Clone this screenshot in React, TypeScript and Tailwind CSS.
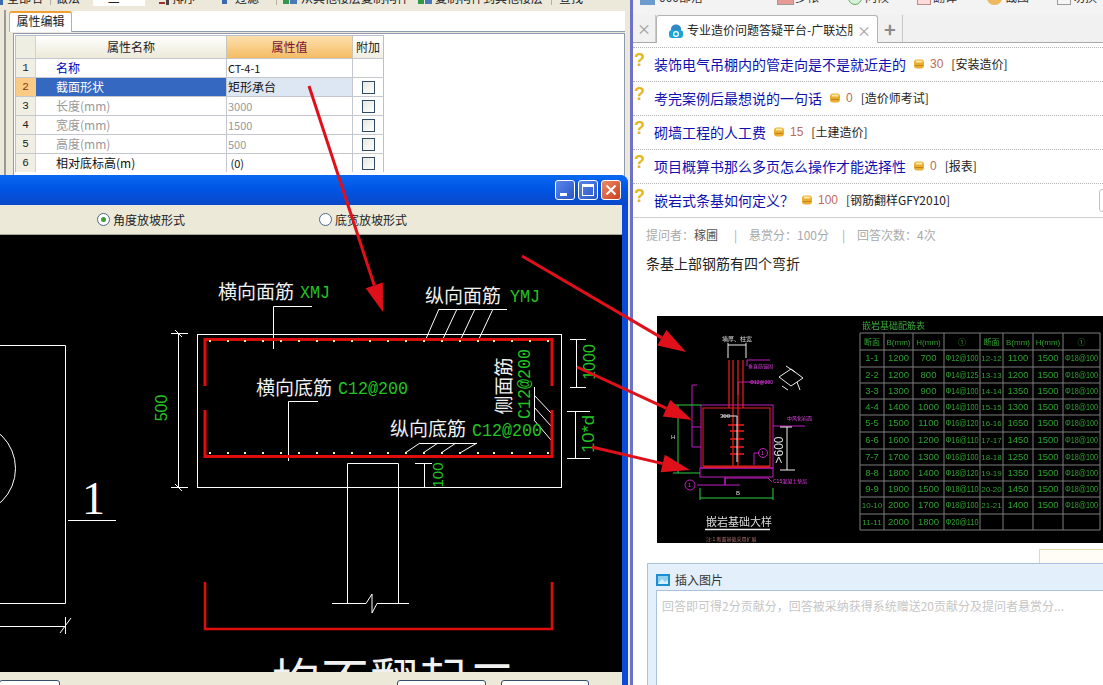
const QUESTIONS = [
  { title: "装饰电气吊棚内的管走向是不是就近走的", score: "30", tag: "[安装造价]" },
  { title: "考完案例后最想说的一句话", score: "0", tag: "[造价师考试]" },
  { title: "砌墙工程的人工费", score: "15", tag: "[土建造价]" },
  { title: "项目概算书那么多页怎么操作才能选择性", score: "0", tag: "[报表]" },
  { title: "嵌岩式条基如何定义？", score: "100", tag: "[钢筋翻样GFY2010]" },
];

const PROPS = [
  { no: "1", name: "名称", value: "CT-4-1", kind: "link", noCheck: true },
  { no: "2", name: "截面形状", value: "矩形承台", kind: "selected" },
  { no: "3", name: "长度(mm)", value: "3000", kind: "muted" },
  { no: "4", name: "宽度(mm)", value: "1500", kind: "muted" },
  { no: "5", name: "高度(mm)", value: "500", kind: "muted" },
  { no: "6", name: "相对底标高(m)", value: " (0)", kind: "plain" },
];

const TOP_DOTS = [210, 228, 245, 263, 281, 299, 317, 334, 352, 370, 388, 406, 424, 442, 460, 478, 494, 512, 530, 548];

const REBAR_ROWS = [
  ["1-1", "1200", "700", "Φ12@100", "12-12", "1100", "1500", "Φ18@100"],
  ["2-2", "1200", "800", "Φ14@125", "13-13", "1200", "1500", "Φ18@100"],
  ["3-3", "1300", "900", "Φ14@100", "14-14", "1350", "1500", "Φ18@100"],
  ["4-4", "1400", "1000", "Φ14@100", "15-15", "1300", "1500", "Φ18@100"],
  ["5-5", "1500", "1100", "Φ16@120", "16-16", "1650", "1500", "Φ18@100"],
  ["6-6", "1600", "1200", "Φ16@110", "17-17", "1450", "1500", "Φ18@100"],
  ["7-7", "1700", "1300", "Φ16@100", "18-18", "1250", "1500", "Φ18@100"],
  ["8-8", "1800", "1400", "Φ18@120", "19-19", "1350", "1500", "Φ18@100"],
  ["9-9", "1900", "1500", "Φ18@110", "20-20", "1450", "1500", "Φ18@100"],
  ["10-10", "2000", "1700", "Φ18@100", "21-21", "1400", "1500", "Φ18@100"],
  ["11-11", "2000", "1800", "Φ20@110", "", "", "", ""],
];
const COL_X = [860, 884, 913, 944, 980, 1003, 1033, 1063, 1100];
const ROW_Y = [333, 350, 367, 383, 399, 415, 432, 449, 465, 481, 497, 514, 530];
const ARROWS = [
  [309, 86, 383, 312],
  [522, 256, 686, 352],
  [577, 367, 692, 420],
  [592, 447, 690, 470],
];

function Coin() {
  return (
    <svg width="10" height="10" viewBox="0 0 10 10" className="block shrink-0">
      <rect x="0" y="0.5" width="10" height="9" rx="3" fill="#e9ae30" />
      <rect x="1.5" y="1.5" width="7" height="2" rx="1" fill="#fbe9a6" />
      <rect x="1" y="6" width="8" height="1" fill="#c4831a" />
    </svg>
  );
}

function Checkbox() {
  return <span className="block w-[13px] h-[13px] border border-[#2f4a63] bg-gradient-to-br from-[#e8e8e0] to-white" />;
}

function Toolbars() {
  return (
    <div className="h-[10px] shrink-0 bg-[#ece8da] overflow-hidden text-[12px] leading-none text-[#222]">
      <div className="flex items-start -mt-[8px]">
        <span className="w-[3px] h-[13px] bg-[#3a6ab0] mr-[4px]" />
        <span className="w-[43px]">全部名</span>
        <span className="w-[35px] h-[13px] border-l border-[#b5b0a0] pl-[5px]">做法</span>
        <span className="w-[73px] h-[14px] pl-[8px]"><span className="block w-[52px] h-[14px] bg-white">一 二</span></span>
        <span className="w-[64px] flex">
          <span className="w-[6px] h-[12px] ml-[1px] border-b-2 border-[#a03030]" />
          <span className="w-[3px] h-[13px] ml-[1px] mr-[3px] bg-[#444]" />
          排序
        </span>
        <span className="w-[54px] flex">
          <span className="w-[5px] h-[12px] mr-[8px] bg-[#3a6ab0]" />
          过滤
        </span>
        <span className="w-[136px] h-[13px] border-l border-[#b5b0a0] flex">
          <span className="w-[6px] h-[12px] ml-[6px] bg-[#2f9a4a]" />
          <span className="w-[7px] h-[12px] ml-[1px] mr-[4px] bg-[#4a78b8]" />
          从其他楼层复制构件
        </span>
        <span className="w-[139px] flex">
          <span className="w-[6px] h-[12px] ml-[6px] bg-[#2f9a4a]" />
          <span className="w-[7px] h-[12px] ml-[1px] mr-[3px] bg-[#4a78b8]" />
          复制构件到其他楼层
        </span>
        <span className="h-[13px] pl-[7px] border-l border-[#b5b0a0]">查找</span>
      </div>
    </div>
  );
}

function PropsTable() {
  return (
    <div className="text-[12px] leading-none w-[369px] border-l border-t border-[#b9c0c8]">
      <div className="grid grid-cols-[20px_191px_126px_31px] h-[22px]">
        <div className="bg-[#efeee2] border-r border-[#d5d3c5]" />
        <div className="flex items-center justify-center bg-gradient-to-b from-white to-[#ece9d8] border-r border-[#c8c6b8] text-[#222]">属性名称</div>
        <div className="flex items-center justify-center bg-gradient-to-b from-[#fde0ac] to-[#f4bc62] border-r border-[#c8c6b8] text-[#7a1030]">属性值</div>
        <div className="flex items-center justify-center bg-gradient-to-b from-white to-[#f0eee2] border-r border-[#b9c0c8] text-[#222]">附加</div>
      </div>
      {PROPS.map((row) => {
        const selected = row.kind === "selected";
        const textColor = row.kind === "link" ? "text-[#0000c0]" : row.kind === "muted" ? "text-[#999]" : "text-[#111]";
        return (
          <div key={row.no} className="grid grid-cols-[20px_191px_126px_31px] h-[19px] border-t border-[#c4c8ce]">
            <div className={`flex items-center justify-center font-['Liberation_Mono',monospace] text-[11px] border-r border-[#d5d3c5] ${selected ? "bg-[#fbcb85] text-[#7a3a10]" : "bg-[#f1efe4] text-[#222]"}`}>{row.no}</div>
            <div className={`flex items-center pl-[20px] border-r border-[#c4c8ce] ${selected ? "bg-[#3568c0] text-white" : `bg-white ${textColor}`}`}>{row.name}</div>
            <div className={`flex items-center pl-[1px] border-r border-[#c4c8ce] whitespace-pre ${selected ? "bg-[#dde7f4] text-[#111]" : `text-[11px] bg-white ${row.kind === "link" ? "text-[#111]" : textColor}`}`}>{row.value}</div>
            <div className="flex items-center justify-center bg-white border-r border-[#b9c0c8]">{row.noCheck ? null : <Checkbox />}</div>
          </div>
        );
      })}
    </div>
  );
}

function PropertyPanel() {
  return (
    <div className="flex-1 flex bg-[#ece8da] pr-[5px]">
      <div className="w-[4px]" />
      <div className="w-[2px] bg-[#9a9a94] h-[165px]" />
      <div className="flex-1 flex flex-col min-w-0 pl-[3px]">
        <div className="flex h-[21px] mt-[1px]">
          <div className="w-[63px] h-[21px] bg-white border-t-2 border-x border-t-[#f0a030] border-x-[#a9b3c0] rounded-t-[3px] text-[12px] leading-[16px] text-center text-[#222]">属性编辑</div>
          <div className="flex-1 bg-white border-b border-[#8e9bb0]" />
        </div>
        <div className="flex-1 bg-white ml-[4px] mt-[1px] border-t border-l border-r border-[#8e9bb0] pl-[1px] pt-[1px]">
          <PropsTable />
        </div>
      </div>
    </div>
  );
}

function CadDrawing() {
  return (
    <svg viewBox="0 235 622 437" className="block w-[622px] h-[437px] font-['Noto_Sans_CJK_SC',sans-serif]">
      <g stroke="#fff" strokeWidth="1" fill="none">
        <rect x="197.5" y="334.5" width="364" height="153" />
        <path d="M0 345.5H65.5V603.5H0M0 626.5H65M65.5 617V634M60 633L71 618M68 520.5H116" />
        <circle cx="-30.5" cy="468.5" r="46" />
        <path d="M178.5 333V487M171 333.5H188M171 487.5H188M175 330L182 337M175 484L182 491" />
        <path d="M273.5 349V306.5H312M439 309.5H507M425 341L439 309M442 341L457 309M460 341L475 309M478 341L493 309" />
        <path d="M288.5 461V401.5H318M420 443.5H477M405 453L420 443M423 453L438 443M441 453L456 443M460 453L477 443" />
        <path d="M534.5 387V420M534 395L551 413M534 407L551 426M534 420L551 440" />
        <path d="M576.5 339V387M570 339.5H586M570 387.5H586M567 411.5H590M567 458.5H590M575.5 411V459" />
        <path d="M424.5 463V487M415 463.5H432" />
        <path d="M347.5 603V463.5H398.5V603M332 603.5H366L372 594V613L377 603.5H409" />
      </g>
      <path d="M205 386V339.5H552V386M205 410V456.5H552V410" stroke="#e00c0c" strokeWidth="3" fill="none" />
      <path d="M205 582V629H552V582" stroke="#e00c0c" strokeWidth="2.5" fill="none" />
      {TOP_DOTS.map((x) => (
        <g key={x} fill="#f5f59a">
          <rect x={x - 1} y="340" width="2" height="2" />
          <rect x={x - 1} y="452" width="2" height="2" />
        </g>
      ))}
      <g fill="#f0f0f0" fontSize="19">
        <text x="218" y="299">横向面筋</text>
        <text x="425" y="303">纵向面筋</text>
        <text x="256" y="395">横向底筋</text>
        <text x="390" y="436">纵向底筋</text>
        <text x="511" y="386" textAnchor="middle" transform="rotate(-90 511 386)">侧面筋</text>
        <text x="272" y="698" fontSize="48" letterSpacing="1">均不翻起二</text>
      </g>
      <g fill="#22c322" className="font-['Liberation_Mono',monospace]" fontSize="19">
        <text x="300" y="298" textLength="30" lengthAdjust="spacingAndGlyphs">XMJ</text>
        <text x="510" y="302" textLength="30" lengthAdjust="spacingAndGlyphs">YMJ</text>
        <text x="338" y="394" textLength="70" lengthAdjust="spacingAndGlyphs">C12@200</text>
        <text x="472" y="436" textLength="70" lengthAdjust="spacingAndGlyphs">C12@200</text>
        <text x="525" y="384" textLength="70" lengthAdjust="spacingAndGlyphs" textAnchor="middle" dominantBaseline="middle" transform="rotate(-90 525 384)">C12@200</text>
      </g>
      <g fill="#22c322" className="font-['Liberation_Sans',sans-serif]" fontSize="16">
        <text x="163" y="408" textAnchor="middle" dominantBaseline="middle" transform="rotate(-90 163 408)">500</text>
        <text x="591" y="362" textAnchor="middle" dominantBaseline="middle" transform="rotate(-90 591 362)">1000</text>
        <text x="590" y="434" textAnchor="middle" dominantBaseline="middle" textLength="38" lengthAdjust="spacingAndGlyphs" transform="rotate(-90 590 434)">10*d</text>
        <text x="439" y="475" fontSize="15" textAnchor="middle" dominantBaseline="middle" transform="rotate(-90 439 475)">100</text>
      </g>
      <text x="82" y="514" fill="#fff" fontSize="46" className="font-['Liberation_Serif',serif]">1</text>
    </svg>
  );
}

function DialogWindow() {
  return (
    <div className="absolute left-0 top-[175px] w-[628px] h-[510px] flex flex-col bg-[#0a4ad6] rounded-tr-[8px] overflow-hidden font-['Noto_Sans_CJK_SC',sans-serif]">
      <div className="h-[30px] shrink-0 bg-gradient-to-b from-[#0a68f0] via-[#0054e3] to-[#0a48c8] flex items-center justify-end gap-[3px] pr-[7px]">
        <div className="w-[20px] h-[20px] rounded-[3px] border border-white bg-gradient-to-br from-[#5a86ea] to-[#2a55c8] relative">
          <span className="absolute left-[4px] bottom-[3px] w-[7px] h-[3px] bg-white" />
        </div>
        <div className="w-[20px] h-[20px] rounded-[3px] border border-white bg-gradient-to-br from-[#5a86ea] to-[#2a55c8] flex items-center justify-center">
          <span className="w-[12px] h-[12px] border border-white border-t-[3px]" />
        </div>
        <div className="w-[20px] h-[20px] rounded-[3px] border border-white bg-gradient-to-br from-[#ea8a68] to-[#cc3c18] flex items-center justify-center">
          <svg width="12" height="12" viewBox="0 0 12 12"><path d="M1.5 1.5L10.5 10.5M10.5 1.5L1.5 10.5" stroke="#fff" strokeWidth="2" /></svg>
        </div>
      </div>
      <div className="mr-[6px] flex-1 flex flex-col min-h-0">
        <div className="h-[30px] shrink-0 bg-[#ece9d8] border-b border-[#a8a698] flex items-center text-[12px] text-[#222]">
          <span className="ml-[97px] w-[13px] h-[13px] rounded-full border border-[#4a6a8a] bg-white flex items-center justify-center">
            <span className="w-[5px] h-[5px] rounded-full bg-[#3aa03a]" />
          </span>
          <span className="ml-[3px] w-[206px]">角度放坡形式</span>
          <span className="w-[13px] h-[13px] rounded-full border border-[#4a6a8a] bg-white" />
          <span className="ml-[3px]">底宽放坡形式</span>
        </div>
        <div className="h-[437px] shrink-0 bg-black overflow-hidden">
          <CadDrawing />
        </div>
        <div className="flex-1 bg-[#ece9d8] flex items-start pt-[8px]">
          <div className="w-[61px] h-[20px] bg-white border border-[#32506e] rounded-[3px] -ml-[1px]" />
          <div className="ml-[337px] w-[89px] h-[20px] bg-white border border-[#32506e] rounded-[3px]" />
          <div className="ml-[15px] w-[88px] h-[20px] bg-white border border-[#32506e] rounded-[3px]" />
        </div>
      </div>
    </div>
  );
}

function FoundationImage() {
  return (
    <svg viewBox="657 316 446 227" className="block w-[446px] h-[227px] bg-black blur-[0.5px] font-['Liberation_Sans','Noto_Sans_CJK_SC',sans-serif]">
      <g stroke="#c01cc0" strokeWidth="1" fill="none">
        <rect x="701" y="405" width="72" height="63" />
        <rect x="700" y="468" width="73" height="9" />
        <path d="M692 427H701M692 447H701M692 427V447M692 427V385H697M747 366V360H770M738 395V382H770M773 426H787H805M772 482L768 478H725V485H697M725 477V485H740" />
        <circle cx="690" cy="485" r="5" />
        <circle cx="763" cy="453" r="4.5" />
        <path d="M758 453H754V465" />
      </g>
      <g stroke="#f02020" fill="none">
        <rect x="703" y="408" width="67" height="58" strokeWidth="1" />
        <path d="M729 360V408M733 360V466M738 360V466M743 360V408" strokeWidth="1.2" />
        <path d="M728 425H744M730 431H744M730 439H744M730 447H744M730 454H744M703 467H770" strokeWidth="1.5" />
      </g>
      <g stroke="#2ecc40" strokeWidth="1" fill="none">
        <path d="M678 405V473M673 405H701M673 473H700M700 498H773M700 488V500M773 488V500" />
      </g>
      <g stroke="#eee" strokeWidth="1" fill="none">
        <path d="M728 345H746M728 343V358M746 343V358M787 427V470M780 427H792M780 470H795M722 416H737V462" />
        <path d="M705 529.5H770" strokeWidth="1.5" />
        <path d="M779 377L791 369L803 378L791 386ZM786 366L795 372M797 382L800 390M782 386L788 390" />
      </g>
      <g fill="#ddd">
        <text x="722" y="341" fontSize="6">墙厚、柱宽</text>
        <text x="720" y="418" fontSize="6">300</text>
        <text x="706" y="526" fontSize="11">嵌岩基础大样</text>
        <text x="736" y="495" fontSize="6">B</text>
        <text x="671" y="439" fontSize="6">H</text>
        <text x="780" y="450" fontSize="12" textAnchor="middle" dominantBaseline="middle" transform="rotate(-90 780 450)">&gt;600</text>
      </g>
      <g fill="#e040e0" fontSize="5">
        <text x="748" y="368">垂直筋锚固</text>
        <text x="750" y="384">Φ12@200</text>
        <text x="787" y="420">中风化岩面</text>
        <text x="773" y="483">C15混凝土垫层</text>
        <text x="706" y="541" fill="#b07070">注:1.断面基础采用扩展</text>
        <text x="688" y="487">1</text>
        <text x="761" y="455">1</text>
      </g>
      <text x="862" y="329" fill="#3aa83a" fontSize="9">嵌岩基础配筋表</text>
      <g stroke="#7c7c7c" strokeWidth="1">
        {COL_X.map((x) => <line key={x} x1={x} x2={x} y1={333} y2={530} />)}
        {ROW_Y.map((y) => <line key={y} y1={y} y2={y} x1={860} x2={1100} />)}
      </g>
      <g fill="#2fa02f" fontSize="9.5" textAnchor="middle">
        {["断面", "B(mm)", "H(mm)", "①", "断面", "B(mm)", "H(mm)", "①"].map((cell, i) => (
          <text key={i} x={(COL_X[i] + COL_X[i + 1]) / 2} y={345} fontSize="8">{cell}</text>
        ))}
        {REBAR_ROWS.map((row, r) =>
          row.map((cell, i) =>
            cell.startsWith("Φ") ? (
              <text key={`${r}-${i}`} x={(COL_X[i] + COL_X[i + 1]) / 2} y={ROW_Y[r + 1] + 11} textLength={33} lengthAdjust="spacingAndGlyphs">{cell}</text>
            ) : (
              <text key={`${r}-${i}`} x={(COL_X[i] + COL_X[i + 1]) / 2} y={ROW_Y[r + 1] + 11} fontSize={cell.length > 3 && cell.includes("-") ? 8 : 9.5}>{cell}</text>
            )
          )
        )}
      </g>
    </svg>
  );
}

function QuestionPanel() {
  return (
    <div className="flex-1 min-w-0 flex flex-col bg-white font-['Noto_Sans_CJK_SC',sans-serif]">
      <div className="h-[14px] shrink-0 bg-[#f3f3f3] overflow-hidden text-[12px] leading-none text-[#333]">
        <div className="flex items-start -mt-[9px]">
          <span className="ml-[7px] w-[15px] h-[14px] bg-[#6c9bd0]" />
          <span className="ml-[4px] w-[118px]">000部落</span>
          <span className="w-[17px] h-[14px] bg-[#e89a94] border border-[#9a9a9a]" />
          <span className="ml-[1px] w-[53px]">多帐</span>
          <span className="w-[14px] h-[14px] rounded-full border border-[#63a863] bg-[#d8f0d8]" />
          <span className="ml-[3px] w-[52px]">问候</span>
          <span className="w-[14px] h-[14px] bg-[#fbdada] border border-[#c08a8a]" />
          <span className="ml-[2px] w-[54px]">翻译</span>
          <span className="w-[15px] h-[14px] bg-[#eeb860] rounded-full" />
          <span className="ml-[3px] w-[52px]">截图</span>
          <span className="w-[14px] h-[14px] border border-[#9a9a9a] bg-[#f5f5f5]" />
          <span className="ml-[2px]">切换</span>
        </div>
      </div>
      <div className="h-[29px] shrink-0 bg-[#f1f1f1] border-b border-[#a9a9a9] flex items-end text-[12px]">
        <div className="w-[23px] h-[27px] flex items-center justify-center text-[#9a9a9a] text-[14px] border-r border-[#c8c8c8]">×</div>
        <div className="w-[222px] h-[28px] -mb-[1px] bg-white border-x border-t border-[#b4b4b4] rounded-t-[3px] flex items-center pl-[11px]">
          <svg width="16" height="18" viewBox="0 0 16 18" className="shrink-0">
            <path d="M3 8C3 2 13 2 13 8V9H3Z" fill="#2f89c8" />
            <rect x="1" y="9" width="14" height="8" rx="3" fill="#1aa3d6" />
            <circle cx="8" cy="13" r="2.4" fill="none" stroke="#fff" strokeWidth="1.2" />
          </svg>
          <span className="ml-[3px] w-[166px] overflow-hidden whitespace-nowrap text-[#222]">专业造价问题答疑平台-广联达服务</span>
          <span className="ml-[4px] text-[#a0a0a0] text-[14px] leading-none">×</span>
        </div>
        <div className="w-[25px] h-[27px] flex items-center justify-center text-[#8a8a8a] text-[20px] font-bold leading-none border-r border-[#c8c8c8]">+</div>
      </div>

      <div className="mt-[4px] shrink-0 border-b border-[#cfcfcf]">
        {QUESTIONS.map((q, i) => (
          <div key={q.title} className="relative h-[34px] border-t border-dotted border-[#b4b4b4] flex items-center pl-[21px] pb-[1px] whitespace-nowrap">
            <span className="absolute left-[1px] top-[1px] text-[18px] leading-[22px] font-bold text-[#e5b820] font-['Liberation_Sans',sans-serif]">?</span>
            <span className="text-[14px] text-[#1010b0]">{q.title}</span>
            <span className="ml-[8px]"><Coin /></span>
            <span className="ml-[6px] text-[12px] text-[#b96c5a] font-['Liberation_Sans',sans-serif]">{q.score}</span>
            <span className="ml-[8px] text-[12px] text-[#222]">{q.tag}</span>
            {i === 4 && <span className="absolute right-[-4px] top-[5px] w-[8px] h-[23px] border border-[#c4c4c4] rounded-[3px]" />}
          </div>
        ))}
      </div>

      <div className="h-[33px] shrink-0 flex items-center pl-[13px] text-[12px] text-[#aaa] whitespace-nowrap">
        <span className="w-[88px]">提问者：<span className="text-[#555]">稼圃</span></span>
        <span className="w-[15px]">|</span>
        <span className="w-[93px]">悬赏分：100分</span>
        <span className="w-[15px]">|</span>
        <span>回答次数：4次</span>
      </div>
      <div className="mt-[2px] h-[20px] shrink-0 pl-[13px] text-[14px] leading-[20px] text-[#222]">条基上部钢筋有四个弯折</div>

      <div className="mt-[43px] ml-[24px] shrink-0"><FoundationImage /></div>

      <div className="mt-[6px] h-[14px] shrink-0 flex justify-end">
        <div className="w-[64px] border-t border-l border-[#e3d9b5] bg-[#fffdf6]" />
      </div>

      <div className="flex-1 ml-[14px] bg-[#e3effb] border-t border-l border-[#a9c3dd] flex flex-col pl-[8px]">
        <div className="h-[26px] pt-[6px] flex items-center text-[12px] text-[#333]">
          <svg width="14" height="12" viewBox="0 0 14 12" className="shrink-0">
            <rect width="14" height="12" fill="#1b8fd0" />
            <rect x="2" y="2" width="10" height="8" fill="#8fd0ee" />
            <path d="M2 10L6 5L9 8L12 6V10Z" fill="#d8f0fa" />
          </svg>
          <span className="ml-[5px]">插入图片</span>
        </div>
        <div className="flex-1 bg-white border-t border-l border-[#a9c3dd] pl-[5px] pt-[7px] text-[12px] leading-[16px] text-[#c6c6c6] whitespace-nowrap">
          回答即可得2分贡献分，回答被采纳获得系统赠送20贡献分及提问者悬赏分...
        </div>
      </div>
    </div>
  );
}

function RedArrows() {
  return (
    <svg viewBox="0 0 1103 685" className="absolute inset-0 w-[1103px] h-[685px] pointer-events-none">
      {ARROWS.map(([x1, y1, x2, y2]) => {
        const len = Math.hypot(x2 - x1, y2 - y1);
        const ux = (x2 - x1) / len;
        const uy = (y2 - y1) / len;
        const bx = x2 - ux * 28;
        const by = y2 - uy * 28;
        const head = `${x2},${y2} ${bx - uy * 9},${by + ux * 9} ${bx + uy * 9},${by - ux * 9}`;
        return (
          <g key={x1}>
            <line x1={x1} y1={y1} x2={bx} y2={by} stroke="#e0101a" strokeWidth="3" />
            <polygon points={head} fill="#e0101a" />
          </g>
        );
      })}
    </svg>
  );
}

export default function App() {
  return (
    <div className="relative w-[1103px] h-[685px] overflow-hidden flex bg-[#ece8da]">
      <div className="w-[630px] shrink-0 flex flex-col font-['Noto_Sans_CJK_SC',sans-serif]">
        <Toolbars />
        <PropertyPanel />
      </div>
      <div className="w-[3px] shrink-0 bg-[#6d72c8]" />
      <QuestionPanel />
      <DialogWindow />
      <RedArrows />
    </div>
  );
}
